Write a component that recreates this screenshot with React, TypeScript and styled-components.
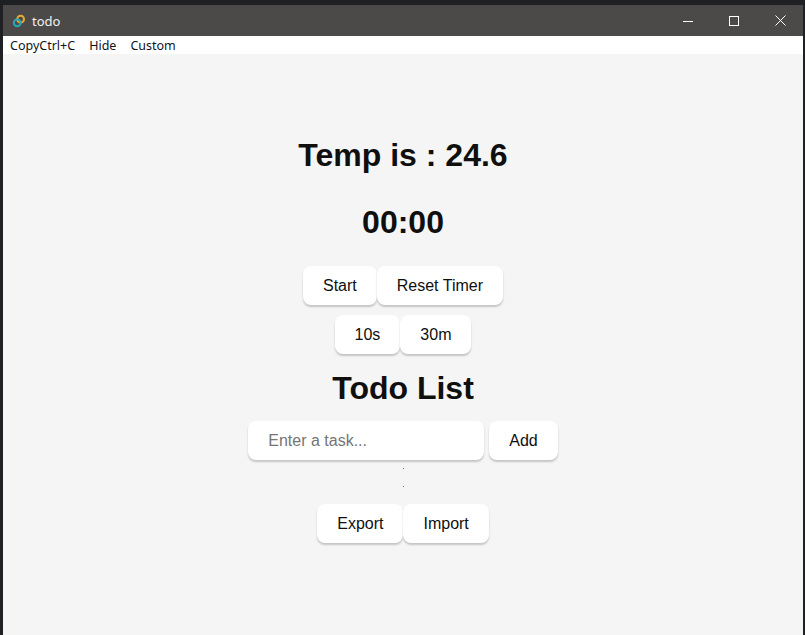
import React from 'react';
import styled, { createGlobalStyle } from 'styled-components';

const GlobalStyle = createGlobalStyle`
  html, body {
    margin: 0;
    padding: 0;
    height: 100%;
    background: #1b1c22;
  }
  #root {
    height: 100%;
  }
`;

const Desktop = styled.div`
  width: 805px;
  height: 635px;
  overflow: hidden;
  box-sizing: border-box;
  padding: 5px 2px 0 3px;
  background: #1f2024;
`;

const Window = styled.div`
  height: 100%;
  display: flex;
  flex-direction: column;
  background: #f5f5f5;
  font-family: 'Liberation Sans', Arial, sans-serif;
  color: #0f0f0f;
`;

const TitleBar = styled.div`
  height: 31px;
  flex: none;
  display: flex;
  align-items: center;
  background: #4c4a48;
  color: #fff;
`;

const AppIcon = styled.svg`
  width: 14px;
  height: 14px;
  margin-left: 9px;
`;

const AppTitle = styled.span`
  margin-left: 6px;
  flex: 1;
  font-family: 'Noto Sans', sans-serif;
  font-size: 13px;
  color: #f2f2f2;
`;

const WinButton = styled.div`
  width: 46px;
  height: 31px;
  display: flex;
  align-items: center;
  justify-content: center;
`;

const MenuBar = styled.div`
  height: 18px;
  flex: none;
  display: flex;
  align-items: center;
  gap: 14px;
  padding-left: 7px;
  background: #fff;
  font-family: 'Noto Sans', sans-serif;
  font-size: 12.5px;
  color: #10131c;
`;

const Content = styled.main`
  flex: 1;
  display: flex;
  flex-direction: column;
  align-items: center;
  padding-top: 83px;
`;

const Heading = styled.h1<{ $after: number }>`
  margin: 0 0 ${(p) => p.$after}px;
  font-size: 32px;
  line-height: 37px;
  font-weight: 700;
  text-align: center;
`;

const ButtonRow = styled.div<{ $after: number }>`
  display: flex;
  margin-bottom: ${(p) => p.$after}px;
`;

const Button = styled.button`
  height: 39px;
  padding: 0 20px;
  border: none;
  border-radius: 8px;
  background: #fff;
  color: #0f0f0f;
  font-family: inherit;
  font-size: 16px;
  box-shadow: 0 2px 2px rgba(0, 0, 0, 0.2);
`;

const TaskForm = styled.form`
  display: flex;
  gap: 5px;
  margin-bottom: 8px;
`;

const TaskInput = styled.input`
  width: 236px;
  height: 39px;
  box-sizing: border-box;
  padding: 0 20px;
  border: none;
  border-radius: 8px;
  background: #fff;
  font-family: inherit;
  font-size: 16px;
  box-shadow: 0 2px 2px rgba(0, 0, 0, 0.2);

  &::placeholder {
    color: #757575;
  }
`;

const Dot = styled.span`
  width: 1px;
  height: 1px;
  margin-bottom: 17px;
  background: #777;
`;

const App: React.FC = () => (
  <>
    <GlobalStyle />
    <Desktop>
      <Window>
        <TitleBar>
          <AppIcon viewBox="0 0 14 14" fill="none">
            <circle cx="8.6" cy="5.2" r="3.4" stroke="#e8a92e" strokeWidth="2" />
            <circle cx="5.2" cy="8.8" r="3.4" stroke="#27a7b8" strokeWidth="2" />
          </AppIcon>
          <AppTitle>todo</AppTitle>
          <WinButton>
            <svg width="10" height="10" viewBox="0 0 10 10">
              <path d="M0 5.5H10" stroke="#fff" />
            </svg>
          </WinButton>
          <WinButton>
            <svg width="10" height="10" viewBox="0 0 10 10" fill="none">
              <rect x="0.5" y="0.5" width="9" height="9" stroke="#fff" />
            </svg>
          </WinButton>
          <WinButton>
            <svg width="11" height="11" viewBox="0 0 11 11">
              <path d="M0.5 0.5L10.5 10.5M10.5 0.5L0.5 10.5" stroke="#fff" />
            </svg>
          </WinButton>
        </TitleBar>
        <MenuBar>
          <span>CopyCtrl+C</span>
          <span>Hide</span>
          <span>Custom</span>
        </MenuBar>
        <Content>
          <Heading $after={30}>Temp is : 24.6</Heading>
          <Heading $after={25}>00:00</Heading>
          <ButtonRow $after={10}>
            <Button>Start</Button>
            <Button>Reset Timer</Button>
          </ButtonRow>
          <ButtonRow $after={16}>
            <Button>10s</Button>
            <Button>30m</Button>
          </ButtonRow>
          <Heading $after={14}>Todo List</Heading>
          <TaskForm>
            <TaskInput placeholder="Enter a task..." />
            <Button type="button">Add</Button>
          </TaskForm>
          <Dot />
          <Dot />
          <ButtonRow $after={0}>
            <Button>Export</Button>
            <Button>Import</Button>
          </ButtonRow>
        </Content>
      </Window>
    </Desktop>
  </>
);

export default App;
